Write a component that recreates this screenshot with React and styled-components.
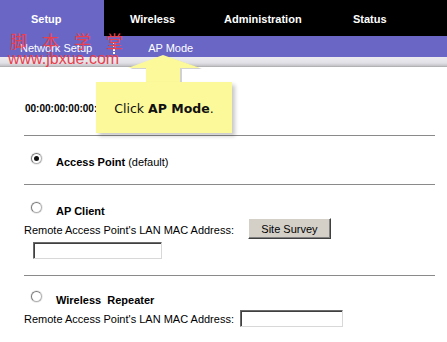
import React from 'react';
import styled, { createGlobalStyle } from 'styled-components';

const PURPLE = '#6966c6';

const GlobalStyle = createGlobalStyle`
  html, body {
    margin: 0;
    padding: 0;
    background: #fff;
  }
  body {
    font-family: "Liberation Sans", Arial, sans-serif;
    font-size: 11px;
    color: #000;
  }
`;

const Page = styled.div`
  position: relative;
  width: 447px;
  height: 342px;
  overflow: hidden;
  background: #fff;
`;

// top navigation
const TopNav = styled.div`
  display: flex;
  height: 36px;
  background: #000;
`;

const Tab = styled.div`
  width: ${p => p.$w}px;
  padding-left: ${p => p.$pl}px;
  box-sizing: border-box;
  height: 36px;
  line-height: 39px;
  font-weight: bold;
  font-size: 11px;
  color: #fff;
  background: ${p => (p.$active ? PURPLE : 'transparent')};
`;

const SubNav = styled.div`
  display: flex;
  align-items: center;
  height: 21px;
  background: ${PURPLE};
  color: #fff;
  font-size: 11px;
`;

const SubItem = styled.span`
  margin-left: ${p => p.$ml}px;
  padding-top: 3px;
  line-height: 18px;
`;

const SubDivider = styled.span`
  width: 0;
  height: 12px;
  margin-left: 21px;
  margin-top: 3px;
  border-left: 2px dotted #fff;
`;

const Strip = styled.div`
  height: 10px;
  background: linear-gradient(#ececf0 0%, #e0e0e6 60%, #c8c8cc 85%, #a8a8a8 100%);
`;

// content
const Content = styled.div`
  padding: 0 12px 0 24px;
`;

const MacRow = styled.div`
  height: 68px;
  box-sizing: border-box;
  padding-top: 36px;
  padding-left: 1px;
  line-height: 12px;
  font-size: 10px;
  font-weight: bold;
`;

const Rule = styled.div`
  height: 1px;
  background: #8a8a8a;
  width: 411px;
`;

const OptionRow = styled.div`
  display: flex;
  align-items: center;
  height: 14px;
  margin-top: ${p => p.$mt}px;
  margin-bottom: ${p => p.$mb || 0}px;
`;

const Radio = styled.span`
  position: relative;
  width: 9px;
  height: 9px;
  margin-left: 7px;
  margin-top: -3px;
  border-radius: 50%;
  background: #fff;
  border: 1px solid #b0b0b0;
  border-top-color: #7a7a7a;
  border-left-color: #7a7a7a;
  box-shadow: 0 0 0 1px #ececec;

  &::after {
    content: '';
    display: ${p => (p.$checked ? 'block' : 'none')};
    position: absolute;
    left: 2px;
    top: 2px;
    width: 5px;
    height: 5px;
    border-radius: 50%;
    background: #111;
  }
`;

const OptionLabel = styled.span`
  margin-left: 14px;
  font-size: 11px;
  font-weight: bold;
  white-space: pre;
  padding-top: 3px;
`;

const Note = styled.span`
  font-weight: normal;
`;

const FieldRow = styled.div`
  display: flex;
  align-items: flex-start;
  margin-top: ${p => p.$mt}px;
`;

const FieldLabel = styled.span`
  font-size: 11px;
  line-height: 13px;
  margin-top: ${p => p.$lt}px;
  white-space: nowrap;
`;

const Button = styled.button`
  margin-left: 14px;
  width: 83px;
  height: 21px;
  padding: 0;
  background: #d4d0c8;
  font-family: "Liberation Sans", Arial, sans-serif;
  font-size: 11px;
  color: #000;
  border: 1px solid;
  border-color: #fff #404040 #404040 #fff;
  box-shadow: inset -1px -1px 0 #808080;
`;

const TextInput = styled.input`
  box-sizing: border-box;
  width: ${p => p.$w}px;
  height: 17px;
  margin-left: ${p => p.$ml}px;
  margin-top: ${p => p.$mt || 0}px;
  padding: 0;
  background: #fff;
  border: 1px solid;
  border-color: #6a6a6a #d8d8d8 #d8d8d8 #6a6a6a;
  box-shadow: inset 1px 1px 0 #404040;
  display: block;
`;

const Spacer = styled.div`
  height: ${p => p.$h}px;
`;

// callout
const Callout = styled.div`
  position: absolute;
  left: 96px;
  top: 82px;
  width: 136px;
  height: 51px;
  background: #fcf99b;
  box-shadow: 3px 3px 4px rgba(0, 0, 0, 0.22);
  display: flex;
  align-items: center;
  justify-content: center;
  font-family: "DejaVu Sans", Verdana, sans-serif;
  font-size: 12.5px;
  color: #111;
  padding-top: 1px;
  box-sizing: border-box;
`;

const ArrowSvg = styled.svg`
  position: absolute;
  left: 126px;
  top: 54px;
  overflow: visible;
`;

// watermark
const Watermark = styled.div`
  position: absolute;
  left: 8px;
  top: 31px;
  color: #e8404c;
  pointer-events: none;
`;

const WatermarkCjk = styled.div`
  font-family: "Noto Sans CJK SC", sans-serif;
  font-size: 17px;
  line-height: 20px;
  letter-spacing: 15px;
  padding-left: 2px;
`;

const WatermarkUrl = styled.div`
  font-family: "Liberation Sans", Arial, sans-serif;
  font-size: 16px;
  line-height: 16px;
`;

export default function App() {
  return (
    <Page>
      <GlobalStyle />
      <TopNav>
        <Tab $w={104} $pl={31} $active>Setup</Tab>
        <Tab $w={120} $pl={26}>Wireless</Tab>
        <Tab $w={129} $pl={0}>Administration</Tab>
        <Tab $w={94} $pl={0}>Status</Tab>
      </TopNav>
      <SubNav>
        <SubItem $ml={20}>Network Setup</SubItem>
        <SubDivider />
        <SubItem $ml={33}>AP Mode</SubItem>
      </SubNav>
      <Strip />

      <Content>
        <MacRow>00:00:00:00:00:00</MacRow>
        <Rule />

        <OptionRow $mt={17} $mb={17}>
          <Radio $checked />
          <OptionLabel>Access Point <Note>(default)</Note></OptionLabel>
        </OptionRow>
        <Rule />

        <OptionRow $mt={17}>
          <Radio />
          <OptionLabel>AP Client</OptionLabel>
        </OptionRow>
        <FieldRow $mt={2}>
          <FieldLabel $lt={6}>Remote Access Point's LAN MAC Address:</FieldLabel>
          <Button>Site Survey</Button>
        </FieldRow>
        <TextInput $w={129} $ml={9} $mt={3} />
        <Spacer $h={16} />
        <Rule />

        <OptionRow $mt={15}>
          <Radio />
          <OptionLabel>{'Wireless  Repeater'}</OptionLabel>
        </OptionRow>
        <FieldRow $mt={5}>
          <FieldLabel $lt={3}>Remote Access Point's LAN MAC Address:</FieldLabel>
          <TextInput $w={103} $ml={6} />
        </FieldRow>
      </Content>

      <ArrowSvg width="76" height="30" viewBox="0 0 76 30">
        <polygon
          points="37,1 74,14 54,14 54,29 20,29 20,14 2,14"
          fill="rgba(0,0,0,0.18)"
          transform="translate(2,1)"
        />
        <polygon points="37,1 74,14 54,14 54,29 20,29 20,14 2,14" fill="#fcf99b" />
      </ArrowSvg>
      <Callout>
        Click&nbsp;<b>AP Mode</b>.
      </Callout>

      <Watermark>
        <WatermarkCjk>脚本学堂</WatermarkCjk>
        <WatermarkUrl>www.jbxue.com</WatermarkUrl>
      </Watermark>
    </Page>
  );
}
